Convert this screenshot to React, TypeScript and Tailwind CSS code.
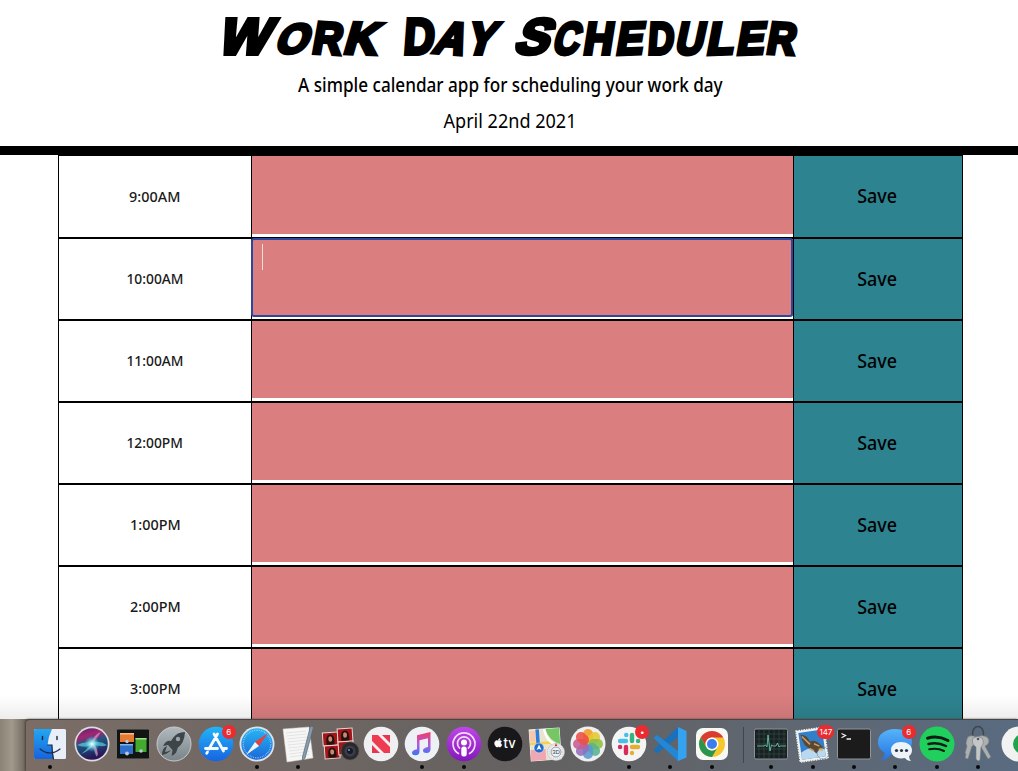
import React from 'react';

const HOURS = ['9:00AM', '10:00AM', '11:00AM', '12:00PM', '1:00PM', '2:00PM', '3:00PM'];

type Glyph = { c: string; w: string; t: string };
const WORDS: Glyph[][] = [
  [
    { c: 'W', w: 'w-[58px] text-[51px]', t: '-skew-x-[17deg] scale-x-[1.06]' },
    { c: 'o', w: 'w-[35px] text-[45px]', t: '-skew-x-[20deg] scale-x-[.92] scale-y-[.92]' },
    { c: 'r', w: 'w-[33px] text-[45px]', t: '-skew-x-[8deg] scale-x-[.9] rotate-[3deg]' },
    { c: 'k', w: 'w-[38px] text-[45px]', t: '-skew-x-[14deg] scale-x-[1.02] rotate-[2deg]' },
  ],
  [
    { c: 'D', w: 'w-[32px] text-[51px]', t: '-skew-x-[5deg] scale-x-[.84]' },
    { c: 'a', w: 'w-[33px] text-[45px]', t: '-skew-x-[18deg] scale-x-[.94] rotate-[4deg]' },
    { c: 'y', w: 'w-[29px] text-[45px]', t: '-skew-x-[18deg] scale-x-[.94]' },
  ],
  [
    { c: 'S', w: 'w-[35px] text-[51px]', t: '-skew-x-[20deg] scale-x-[1] rotate-[2deg]' },
    { c: 'c', w: 'w-[30px] text-[45px]', t: '-skew-x-[18deg] scale-x-[.8]' },
    { c: 'h', w: 'w-[32px] text-[45px]', t: '-skew-x-[10deg] scale-x-[.9]' },
    { c: 'e', w: 'w-[32px] text-[45px]', t: '-skew-x-[13deg] scale-x-[.9] -rotate-[2deg]' },
    { c: 'd', w: 'w-[28px] text-[45px]', t: '-skew-x-[5deg] scale-x-[.8]' },
    { c: 'u', w: 'w-[31px] text-[45px]', t: '-skew-x-[14deg] scale-x-[.86]' },
    { c: 'l', w: 'w-[30px] text-[45px]', t: '-skew-x-[13deg] scale-x-[.98] -rotate-[2deg]' },
    { c: 'e', w: 'w-[31px] text-[45px]', t: '-skew-x-[13deg] scale-x-[.92] -rotate-[2deg]' },
    { c: 'r', w: 'w-[30px] text-[45px]', t: '-skew-x-[8deg] scale-x-[.88] rotate-[3deg]' },
  ],
];

function Title() {
  return (
    <h1 className="flex h-[72px] justify-center gap-[21px] pr-[2px] pt-[4px] font-['Liberation_Sans'] font-bold uppercase leading-[66px] [-webkit-text-stroke:4px_#000]">
      {WORDS.map((word, i) => (
        <span key={i} className="flex items-baseline">
          {word.map((g, j) => (
            <span key={j} className={`${g.w} flex justify-center`}>
              <span className={`inline-block ${g.t}`}>{g.c}</span>
            </span>
          ))}
        </span>
      ))}
    </h1>
  );
}

function Svg({ children }: { children: React.ReactNode }) {
  return (
    <svg viewBox="0 0 36 36" className="size-9 overflow-visible">
      {children}
    </svg>
  );
}

const Finder = () => (
  <Svg>
    <defs>
      <linearGradient id="fl" x2="0" y2="1"><stop stopColor="#22a7f2" /><stop offset="1" stopColor="#1763dd" /></linearGradient>
    </defs>
    <rect x="2" y="3" width="32" height="30" rx="1.500" fill="#e9eff8" />
    <path d="M3.500 3H20q-4 8-4.500 16H20q0 8 1.500 14H3.500Q2 33 2 31.500v-27Q2 3 3.500 3Z" fill="url(#fl)" />
    <path d="M10.500 10.500v3M25 10.500v3" stroke="#152238" strokeWidth="1.400" strokeLinecap="round" />
    <path d="M8 23q10 8 20 0M15.500 19H20q0 8 1.500 14" fill="none" stroke="#1b2942" strokeWidth="1.200" strokeLinecap="round" />
  </Svg>
);

const Siri = () => (
  <Svg>
    <defs>
      <linearGradient id="sr" x2=".3" y2="1"><stop stopColor="#3b2a78" /><stop offset=".3" stopColor="#a5246f" /><stop offset=".55" stopColor="#1d5580" /><stop offset="1" stopColor="#2a1656" /></linearGradient>
      <radialGradient id="sg"><stop stopColor="#fff" /><stop offset=".4" stopColor="#8fe9ef" stopOpacity=".8" /><stop offset="1" stopColor="#4bd" stopOpacity="0" /></radialGradient>
    </defs>
    <circle cx="18" cy="18" r="17.500" fill="#dddbe0" />
    <circle cx="18" cy="18" r="15.800" fill="url(#sr)" />
    <path d="M3 19q9 4 15-1Q11 25 7 28q9-3 12-10 1 9 4 13 1-9-3-13 7 4 13 1-6-4-13-3Q24 8 26 6q-7 4-8 11-7-2-15 2Z" fill="#58dce4" opacity=".65" />
    <path d="M18 18Q25 10 27 6q-8 3-9 12M19 18q2 9 5 12 0-8-5-12" fill="#f065b0" opacity=".8" />
    <circle cx="18" cy="18" r="8" fill="url(#sg)" />
  </Svg>
);

const Mission = () => (
  <Svg>
    <rect x="1.500" y="3" width="33" height="30" rx="1.500" fill="#111413" stroke="#6f706d" />
    <rect x="5" y="7" width="14" height="9" fill="#e67a32" /><path d="M5 7h14v1.500H5z" fill="#f7bd91" />
    <rect x="5" y="18" width="13" height="10" fill="#2e6fc9" /><path d="M5 18h13v1.500H5z" fill="#85b3ed" />
    <rect x="20.500" y="12" width="11" height="14" fill="#42ab2f" /><path d="M20.500 12h11v1.500h-11z" fill="#9ddf8c" />
    <g fill="#b9c8d8"><circle cx="12" cy="15.500" r="1.700" /><circle cx="12" cy="27.500" r="1.900" /><circle cx="26" cy="25" r="1.800" /></g>
  </Svg>
);

const Launchpad = () => (
  <Svg>
    <defs><linearGradient id="lp" x2="0" y2="1"><stop stopColor="#b1b9bd" /><stop offset="1" stopColor="#78848a" /></linearGradient></defs>
    <circle cx="18" cy="18" r="17" fill="url(#lp)" stroke="#c8cacc" />
    <path d="M29 6q-8 0-12 6l-2 3q-5-1-8 5l5-1 4.500 5-1 6q6-3 6-8 7-5 7.500-16Z" fill="#3e4549" />
    <circle cx="22" cy="13" r="2.200" fill="#9ba4a9" />
    <path d="M11 20q-5 2-5 9 6-1 9-5-4 2-6 2 1-3 2-6Z" fill="#3e4549" />
  </Svg>
);

const AppStore = () => (
  <Svg>
    <defs><linearGradient id="as" x2="0" y2="1"><stop stopColor="#22b4f8" /><stop offset="1" stopColor="#1764e2" /></linearGradient></defs>
    <circle cx="18" cy="18" r="17.300" fill="url(#as)" />
    <path d="M19.500 8 11 23M16 8l9.500 17M7.500 22.500h12M24 22.500h4.500M9.500 26l-.8 1.300" stroke="#f6fbff" strokeWidth="2.800" strokeLinecap="round" fill="none" />
  </Svg>
);

const Safari = () => (
  <Svg>
    <defs><linearGradient id="sf" x2="0" y2="1"><stop stopColor="#28b4f2" /><stop offset="1" stopColor="#1b68d9" /></linearGradient></defs>
    <circle cx="18" cy="18" r="17.500" fill="#dfe3e8" />
    <circle cx="18" cy="18" r="15.700" fill="url(#sf)" />
    <circle cx="18" cy="18" r="13.800" fill="none" stroke="#a8dbfb" strokeWidth="1.400" strokeDasharray=".6 1.160" />
    <path d="m29 7-13 9 4 4Z" fill="#e8413c" /><path d="m7 29 9-13 4 4Z" fill="#f1f3f6" />
  </Svg>
);

const TextEdit = () => (
  <Svg>
    <path d="m3 3 26-2 4 31-26 4Z" fill="#f6f6f4" stroke="#d3d1ce" strokeWidth=".5" />
    <path d="m6 7 20-2M6.500 10l20-2M7 13l20-2M7.500 16l20-2M8 19l20-2M8.500 22l20-2M9 25l20-2.500M9.500 28l20-2.500M10 31l19-2.500" stroke="#cdd2d8" strokeWidth=".5" />
    <path d="m30.500 0 3 1L25 32l-2.500 3v-4Z" fill="#8a9cab" stroke="#536576" strokeWidth=".7" />
  </Svg>
);

const PhotoBooth = () => (
  <Svg>
    <g transform="rotate(-4 16 16)">
      {[[1, 6], [16, 3], [2, 19], [16, 16]].map(([x, y]) => (
        <g key={`${x}-${y}`} transform={`translate(${x} ${y})`}>
          <rect width="15" height="13" fill="#a31518" stroke="#e5d7d2" strokeWidth="1" />
          <path d="M3.500 12q-1-10 4-10t4 10Z" fill="#241110" />
          <ellipse cx="7.500" cy="6.500" rx="2" ry="2.700" fill="#c98a72" />
        </g>
      ))}
    </g>
    <circle cx="28" cy="25" r="9" fill="#29292d" stroke="#555" strokeWidth=".6" />
    <circle cx="28" cy="25" r="5.500" fill="#3c3e46" /><circle cx="28" cy="25" r="3" fill="#151a2a" /><circle cx="27" cy="24" r="1" fill="#8190b5" />
  </Svg>
);

const News = () => (
  <Svg>
    <circle cx="18" cy="18" r="17.300" fill="#f0eff2" />
    <path d="M9 9h6L27 21v6h-6L9 15Z" fill="#ef3b52" />
    <path d="M9 19v8h8ZM19 9h8v8Z" fill="#e8344d" />
  </Svg>
);

const Music = () => (
  <Svg>
    <defs><linearGradient id="mu" x2="0" y2="1"><stop stopColor="#f33b62" /><stop offset=".55" stopColor="#b05be0" /><stop offset="1" stopColor="#3479f1" /></linearGradient></defs>
    <circle cx="18" cy="18" r="17.300" fill="#edf0f4" />
    <path d="M13 9.300 26.500 6v17q0 4-4 4-3.500 0-3.500-2.500t5-3.500V12.300l-8.500 2v11q0 4-4 4-3.500 0-3.500-2.500t5-3.500Z" fill="url(#mu)" />
  </Svg>
);

const Podcasts = () => (
  <Svg>
    <defs><linearGradient id="pc" x2="0" y2="1"><stop stopColor="#c046e8" /><stop offset="1" stopColor="#8417bd" /></linearGradient></defs>
    <circle cx="18" cy="18" r="17.300" fill="url(#pc)" />
    <g fill="none" stroke="#f3dcfc" strokeWidth="1.700" strokeLinecap="round">
      <path d="M12.500 27.500a11 11 0 1 1 11 0" /><path d="M13.500 22a6.500 6.500 0 1 1 9 0" />
    </g>
    <circle cx="18" cy="16.500" r="3" fill="#fff" /><rect x="15.300" y="20.500" width="5.400" height="10" rx="2.500" fill="#fff" />
  </Svg>
);

const Tv = () => (
  <Svg>
    <circle cx="18" cy="18" r="17.300" fill="#18181a" />
    <path transform="translate(5.500 11) scale(.48)" d="M17.050 20.280c-.98.950-2.050.8-3.080.35-1.090-.46-2.090-.48-3.240 0-1.440.62-2.200.44-3.060-.35C2.790 15.250 3.510 7.590 9.050 7.310c1.350.07 2.290.74 3.080.8 1.180-.24 2.310-.93 3.570-.84 1.510.12 2.650.72 3.400 1.800-3.120 1.870-2.380 5.980.48 7.130-.57 1.500-1.310 2.990-2.540 4.090ZM12.030 7.250c-.15-2.230 1.660-4.070 3.740-4.250.29 2.580-2.340 4.500-3.740 4.250Z" fill="#fff" stroke="#fff" />
    <text x="16.500" y="21.800" className="font-['Inter'] text-[13px] font-medium" fill="#fff">tv</text>
  </Svg>
);

const Maps = () => (
  <Svg>
    <g transform="rotate(-4 16 16)">
      <rect x="2" y="3" width="30" height="31" fill="#e9e4ce" stroke="#f4f3ee" strokeWidth="1" />
      <path d="M18 3h14v16Q21 15 18 3Z" fill="#75c765" /><path d="M2 23h15v11H2z" fill="#f0a6b3" /><path d="M2 4h6v11H2z" fill="#f6c7ae" />
      <path d="M2 17h20l10 5" stroke="#f4d447" strokeWidth="2.500" fill="none" />
      <path d="M17 3q2 15 15 18" stroke="#fff" strokeWidth="2.500" fill="none" />
      <path d="M10 3v19" stroke="#2d7dd5" strokeWidth="3.500" />
    </g>
    <circle cx="11" cy="22" r="5" fill="#236ccc" stroke="#dceafa" strokeWidth=".6" /><path d="m11 18.500 2.500 5.500-2.500-1.200L8.500 24Z" fill="#fff" />
    <circle cx="28" cy="26" r="8.500" fill="#f0f1f2" stroke="#b8babb" strokeWidth=".6" /><circle cx="28" cy="26" r="5" fill="none" stroke="#7d8a96" strokeWidth=".8" /><circle cx="28" cy="26" r="6.800" fill="none" stroke="#9ba1a5" strokeWidth=".8" strokeDasharray=".6 1.500" />
    <path d="m28 17-1.200 3h2.400Z" fill="#e02929" />
    <text x="28" y="28.200" textAnchor="middle" className="font-['Liberation_Sans'] text-[6px]" fill="#345">3D</text>
  </Svg>
);

const PETALS = ['#f59a23', '#e6c82d', '#8fbe43', '#57b58c', '#5b97d0', '#9070b8', '#c85b94', '#ea5045'];
const Photos = () => (
  <Svg>
    <circle cx="18" cy="18" r="17.500" fill="#efeff0" />
    {PETALS.map((c, i) => (
      <rect key={c} x="13" y="3" width="10" height="14.500" rx="5" fill={c} opacity=".88" transform={`rotate(${i * 45} 18 18)`} />
    ))}
  </Svg>
);

const Slack = () => (
  <Svg>
    <circle cx="18" cy="18" r="17.300" fill="#f5f4f5" />
    <g strokeWidth="4.400" strokeLinecap="round">
      <path d="M9 15h6" stroke="#48bfe8" /><path d="M15.200 9h.1" stroke="#48bfe8" />
      <path d="M21 9v6" stroke="#36b37e" /><path d="M27 15h.1" stroke="#36b37e" />
      <path d="M21 21h6" stroke="#e6ae31" /><path d="M21 27v.1" stroke="#e6ae31" />
      <path d="M15 21v6" stroke="#d92a5c" /><path d="M9 21h.1" stroke="#d92a5c" />
    </g>
  </Svg>
);

const Code = () => (
  <Svg>
    <path d="M1.500 24 26 1v10L5 27.500Z" fill="#1971bd" />
    <path d="M1.500 12 5 9l21 16v10Z" fill="#2487d5" />
    <path d="m26 1 8.500 4v26.500L26 35Z" fill="#35a2ef" />
  </Svg>
);

const Chrome = () => (
  <Svg>
    <rect x="2" y="2" width="32" height="32" rx="7" fill="#f8f8f7" />
    <circle cx="18" cy="18" r="13" fill="#f6c62e" />
    <path d="M6.750 11.500A13 13 0 0 1 29.250 11.500H18A6.500 6.500 0 0 0 12.370 21.250Z" fill="#d93c30" />
    <path d="M6.750 11.500A13 13 0 0 0 18 31L23.630 21.250A6.500 6.500 0 0 1 12.370 21.250Z" fill="#279650" />
    <circle cx="18" cy="18" r="6.500" fill="#fff" /><circle cx="18" cy="18" r="5" fill="#3c7cec" />
  </Svg>
);

const Activity = () => (
  <Svg>
    <rect x="1.500" y="3" width="33" height="30" rx="1.500" fill="#1a2022" stroke="#8c9397" />
    <path d="M6 4v28M11 4v28M16 4v28M21 4v28M26 4v28M31 4v28M3 8h30M3 13h30M3 18h30M3 23h30M3 28h30" stroke="#31514c" strokeWidth=".6" />
    <path d="M4 20h7l1.500-1 1.500 2 1-12 2 16 1.500-6 1.500 1h3l1.500-3 1.500 4 1-1h6" stroke="#72d4b2" strokeWidth=".8" fill="none" />
  </Svg>
);

const Mail = () => (
  <Svg>
    <g transform="rotate(-8 18 18)">
      <rect x="3" y="3" width="28" height="31" fill="#f2f1ed" stroke="#f2f1ed" strokeWidth="1.800" strokeDasharray="1.500 1" />
      <rect x="5" y="5" width="24" height="27" fill="#3280cc" /><path d="M5 25q12-7 24 0v7H5Z" fill="#b8d9f0" />
      <path d="M7 7q7 1 8 8 5-1 8 2l5 6-4 1-4 4-3-4Q7 19 7 7Z" fill="#5b4632" />
      <path d="m8 9 7 9M19 18l5 3M14 22l4 3" stroke="#c2a078" strokeWidth="1.600" /><path d="m23 24 4 1" stroke="#e7ae3b" strokeWidth="2" />
    </g>
    <circle cx="28" cy="27" r="6" fill="none" stroke="#62717f" strokeWidth="1" opacity=".5" />
  </Svg>
);

const Terminal = () => (
  <Svg>
    <rect x="1.500" y="3" width="33" height="30" rx="1.500" fill="#1b1b1c" stroke="#91969a" />
    <path d="m5.500 7.500 4 2-4 2.200" stroke="#f0f0f0" strokeWidth="1.300" fill="none" /><path d="M10.500 13h4.500" stroke="#f0f0f0" strokeWidth="1.300" />
  </Svg>
);

const Messages = () => (
  <Svg>
    <defs><linearGradient id="ms" x2="0" y2="1"><stop stopColor="#57b4f8" /><stop offset="1" stopColor="#2375e6" /></linearGradient></defs>
    <path d="M18 3C8 3 1 8.500 1 16c0 5 2.500 8 6.500 10.500Q8 31 3.500 34q7 0 10-5.500C26 30 35 25 35 16S27 3 18 3Z" fill="url(#ms)" />
    <path d="M24 16c-6 0-10 3.500-10 8s4 8.500 10 8.500l4-.5q2 3 6 3-2-2-2-5 3-2 3-6c0-5-5-8-11-8Z" fill="#edf3f7" />
    <g fill="#253749"><circle cx="19.500" cy="24.500" r="1.600" /><circle cx="24.500" cy="24.500" r="1.600" /><circle cx="29.500" cy="24.500" r="1.600" /></g>
  </Svg>
);

const Spotify = () => (
  <Svg>
    <circle cx="18" cy="18" r="17.500" fill="#20cf5c" />
    <g fill="none" stroke="#101b15" strokeLinecap="round">
      <path d="M8.500 12.200q10.500-3 20.500 2.300" strokeWidth="3" /><path d="M9.500 18q9-2.400 17.500 2" strokeWidth="2.500" /><path d="M10.200 23.300q8-1.900 14.800 1.700" strokeWidth="2" />
    </g>
  </Svg>
);

const Keychain = () => (
  <Svg>
    <ellipse cx="18" cy="7.500" rx="5.500" ry="7" fill="none" stroke="#3f464d" strokeWidth="1.600" />
    <g fill="#adb0b1" stroke="#73787b" strokeWidth=".6">
      <path d="M7 13q1-4 7-3 5 2 3 7-2 3-5 3l-4 13-3-1 1-4-1-1 2-7q-2-2 0-7Z" />
      <path d="M17 11q5-3 10 0 4 4 0 8l-2 1 6 11-3 2-7-12q-6-3-4-10Z" />
      <path d="M13 12q5-3 9 0 3 5-1 9l-1 13-2 1-2-2V21q-5-3-3-9Z" fill="#c5c7c7" />
    </g>
    <circle cx="18" cy="13" r="1.300" fill="#555b60" />
  </Svg>
);

const Evergreen = () => (
  <Svg>
    <circle cx="18" cy="18" r="17.500" fill="#f1f3f2" /><circle cx="22" cy="18" r="10" fill="#20a34b" />
  </Svg>
);

type App = { icon: () => React.JSX.Element; dot?: boolean; badge?: string };
const LEFT: App[] = [
  { icon: Finder, dot: true }, { icon: Siri }, { icon: Mission }, { icon: Launchpad },
  { icon: AppStore, badge: '6' }, { icon: Safari, dot: true }, { icon: TextEdit, dot: true },
  { icon: PhotoBooth }, { icon: News }, { icon: Music, dot: true }, { icon: Podcasts, dot: true },
  { icon: Tv }, { icon: Maps }, { icon: Photos }, { icon: Slack, dot: true, badge: '•' },
  { icon: Code, dot: true }, { icon: Chrome, dot: true },
];
const RIGHT: App[] = [
  { icon: Activity, dot: true }, { icon: Mail, dot: true, badge: '147' }, { icon: Terminal, dot: true },
  { icon: Messages, dot: true, badge: '6' }, { icon: Spotify, dot: true }, { icon: Keychain, dot: true }, { icon: Evergreen },
];

function Slot({ icon: Icon, dot, badge }: App) {
  return (
    <div className="relative flex w-[41.350px] shrink-0 flex-col items-center pt-1.5">
      <Icon />
      {dot && <span className="mt-[3px] size-1 rounded-full bg-[#090909]" />}
      {badge && (
        <span className={`absolute top-[5px] flex h-[14px] items-center justify-center rounded-full bg-[#ea2b30] font-['Inter'] text-[8px] leading-none text-white ${badge.length > 1 ? '-right-px w-[17px]' : 'right-[.500px] w-[14px]'}`}>
          {badge}
        </span>
      )}
    </div>
  );
}

function Dock() {
  return (
    <footer className="relative flex h-[52px] bg-linear-to-r from-[#8a8376] via-[#a19a8b] via-[12px] to-[#6d665c] to-[26px] pl-[26px] before:absolute before:inset-x-0 before:-top-6 before:h-6 before:bg-linear-to-b before:from-transparent before:to-black/7">
      <div className="flex min-w-0 flex-1 overflow-hidden rounded-tl-[4px] border-t border-[#484443] bg-linear-to-r from-[#7b6d66] via-[#646160] via-50% to-[#596b80] pl-[3.500px] shadow-[-1px_0_2px_#4b453e]">
        {LEFT.map((a, i) => <Slot key={i} {...a} />)}
        <div className="flex w-[18.400px] shrink-0 justify-center pl-1 pt-[7px]"><span className="h-9 w-px bg-[#3e4650]" /></div>
        {RIGHT.map((a, i) => <Slot key={i} {...a} />)}
      </div>
    </footer>
  );
}

export default function App() {
  return (
    <div className="flex h-[771px] w-[1018px] flex-col overflow-hidden bg-white font-['Noto_Sans',sans-serif] text-black">
      <header className="flex h-[155px] shrink-0 flex-col border-b-[9px] border-black text-center">
        <Title />
        <p className="h-[27px] pl-[2px] text-[19px] font-medium leading-[27px]">
          <span className="inline-block scale-x-[.902]">A simple calendar app for scheduling your work day</span>
        </p>
        <p className="pl-[2px] pt-[8px] text-[19px] leading-[28px]">
          <span className="inline-block scale-x-[.95]">April 22nd 2021</span>
        </p>
      </header>
      <main className="min-h-0 flex-1 overflow-hidden pl-[58px] pr-[55px]">
        {HOURS.map((h, i) => (
          <div key={h} className={`grid grid-cols-[193px_542px_170px] ${i === 0 ? 'h-[83px]' : 'h-[82px]'}`}>
            <div className="flex items-center justify-center border border-r-0 border-black pb-px text-[15px] font-medium text-[#1a1a1a]">
              <span className={`inline-block ${i === 0 || i > 3 ? 'scale-x-[.96]' : 'scale-x-[.92]'}`}>{h}</span>
            </div>
            <div className={`border-y border-l border-black ${i === 1 ? 'relative' : ''}`}>
              <div className={`bg-[#da7e7f] ${i === 0 ? 'h-[78px]' : 'h-[77px]'}`} />
              {i === 1 && (
                <div className="absolute -left-px -top-px h-[79px] w-[542px] rounded-[3px] border-2 border-[#2c479f] pl-[9px] pt-1">
                  <div className="h-[26px] w-px bg-[#f5dcdc]" />
                </div>
              )}
            </div>
            <button className="border border-black bg-[#2e8390] pr-px text-[19px] font-medium">
              <span className="inline-block scale-x-[.94]">Save</span>
            </button>
          </div>
        ))}
      </main>
      <Dock />
    </div>
  );
}
